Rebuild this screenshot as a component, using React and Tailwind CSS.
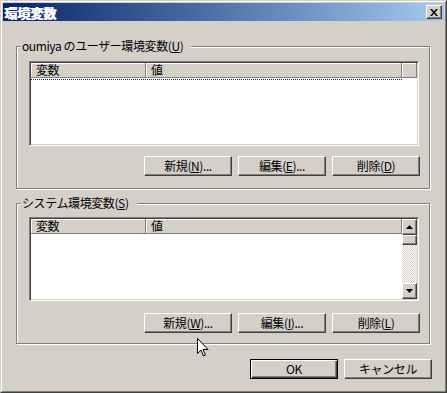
import React from 'react';

const raised = 'border border-t-white border-l-white border-r-[#404040] border-b-[#404040] shadow-[inset_-1px_-1px_0_#808080]';

function Button({ children, isDefault }) {
    const cls = isDefault
        ? 'border border-black shadow-[inset_1px_1px_0_#fff,inset_-1px_-1px_0_#404040,inset_-2px_-2px_0_#808080]'
        : raised;
    return (
        <div className={`w-[88px] h-[20px] bg-[#d4d0c8] flex items-center justify-center text-[12px] leading-[12px] text-black ${cls}`}>
            {children}
        </div>
    );
}

function Key({ children }) {
    return <span className="underline underline-offset-1">{children}</span>;
}

function Header({ filler }) {
    const cell = 'h-[15px] bg-[#d4d0c8] border-r border-b border-[#808080] shadow-[inset_1px_1px_0_#fff] pl-[5px] flex items-center text-[12px] leading-[12px]';
    return (
        <div className="flex">
            <div className={`w-[115px] ${cell}`}>変数</div>
            <div className={`w-[256px] ${cell}`}>値</div>
            {filler && <div className={`flex-1 ${cell}`}></div>}
        </div>
    );
}

function Arrow({ down }) {
    return (
        <div className={`h-[16px] bg-[#d4d0c8] flex items-center justify-center ${raised}`}>
            <svg width="7" height="4" viewBox="0 0 7 4">
                {down ? <polygon points="0,0 7,0 3.5,4" fill="#000" /> : <polygon points="3.5,0 7,4 0,4" fill="#000" />}
            </svg>
        </div>
    );
}

function Scrollbar() {
    return (
        <div className="w-[16px] flex flex-col">
            <Arrow />
            <div className={`h-[10px] bg-[#d4d0c8] ${raised}`}></div>
            <div className="flex-1 bg-[repeating-conic-gradient(#d4d0c8_0%_25%,#ffffff_0%_50%)] bg-[length:2px_2px]"></div>
            <Arrow down />
        </div>
    );
}

function ListView({ height, scroll, focus }) {
    return (
        <div
            className={`ml-[12px] w-[390px] bg-white border border-t-[#808080] border-l-[#808080] border-r-white border-b-white p-px shadow-[inset_1px_1px_0_#404040,inset_-1px_-1px_0_#d4d0c8] ${height}`}
        >
            <div className="flex h-full">
                <div className="flex-1 flex flex-col">
                    <Header filler={!scroll} />
                    {focus && <div className="mt-px w-[371px] border-t border-dotted border-[#0a246a]"></div>}
                </div>
                {scroll && <Scrollbar />}
            </div>
        </div>
    );
}

function Group({ label, className, children }) {
    return (
        <fieldset className={`ml-[13px] w-[414px] border border-[#808080] shadow-[inset_1px_1px_0_#fff,1px_1px_0_#fff] ${className}`}>
            <legend className="ml-[4px] pl-px pr-[8px] bg-[#d4d0c8] text-[12px] leading-[12px]">{label}</legend>
            {children}
        </fieldset>
    );
}

export default function App() {
    return (
        <div className="relative w-[447px] h-[393px] bg-[#d4d0c8] font-['Noto_Sans_CJK_JP',sans-serif] tracking-[-0.4px] text-black border border-t-[#d4d0c8] border-l-[#d4d0c8] border-r-[#404040] border-b-[#404040]">
            <div className="h-full border border-t-white border-l-white border-r-[#808080] border-b-[#808080] p-px flex flex-col">
                {/* title bar */}
                <div className="h-[18px] shrink-0 bg-gradient-to-r from-[#0a246a] to-[#a6caf0] flex items-center justify-between">
                    <span className="pl-px text-white font-bold text-[13px] leading-[13px] tracking-normal [text-shadow:1px_0_0_#fff]">環境変数</span>
                    <div className={`mr-[2px] w-[16px] h-[14px] bg-[#d4d0c8] flex items-center justify-center ${raised}`}>
                        <svg width="8" height="7" viewBox="0 0 8 7">
                            <path d="M0 0h2l2 2.5L6 0h2L5 3.5 8 7H6L4 4.5 2 7H0l3-3.5z" fill="#000" />
                        </svg>
                    </div>
                </div>

                <Group label={<>oumiya のユーザー環境変数(<Key>U</Key>)</>} className="mt-[19px] pt-[9px] pb-[12px]">
                    <ListView height="h-[85px]" focus />
                    <div className="mt-[10px] ml-[127px] flex gap-[6px]">
                        <Button>新規(<Key>N</Key>)...</Button>
                        <Button>編集(<Key>E</Key>)...</Button>
                        <Button>削除(<Key>D</Key>)</Button>
                    </div>
                </Group>

                <Group label={<>システム環境変数(<Key>S</Key>)</>} className="mt-[8px] pt-[8px] pb-[10px]">
                    <ListView height="h-[84px]" scroll />
                    <div className="mt-[12px] ml-[127px] flex gap-[6px]">
                        <Button>新規(<Key>W</Key>)...</Button>
                        <Button>編集(<Key>I</Key>)...</Button>
                        <Button>削除(<Key>L</Key>)</Button>
                    </div>
                </Group>

                <div className="mt-[15px] mr-[12px] flex justify-end gap-[6px]">
                    <Button isDefault>OK</Button>
                    <Button>キャンセル</Button>
                </div>
            </div>

            {/* mouse pointer */}
            <svg className="absolute left-[196px] top-[337px]" width="12" height="20" viewBox="0 0 12 20">
                <path d="M0.5 0.5v15l3.5-3.5 2.5 6 2-1-2.5-5.5h5z" fill="#fff" stroke="#000" strokeWidth="1" />
            </svg>
        </div>
    );
}
